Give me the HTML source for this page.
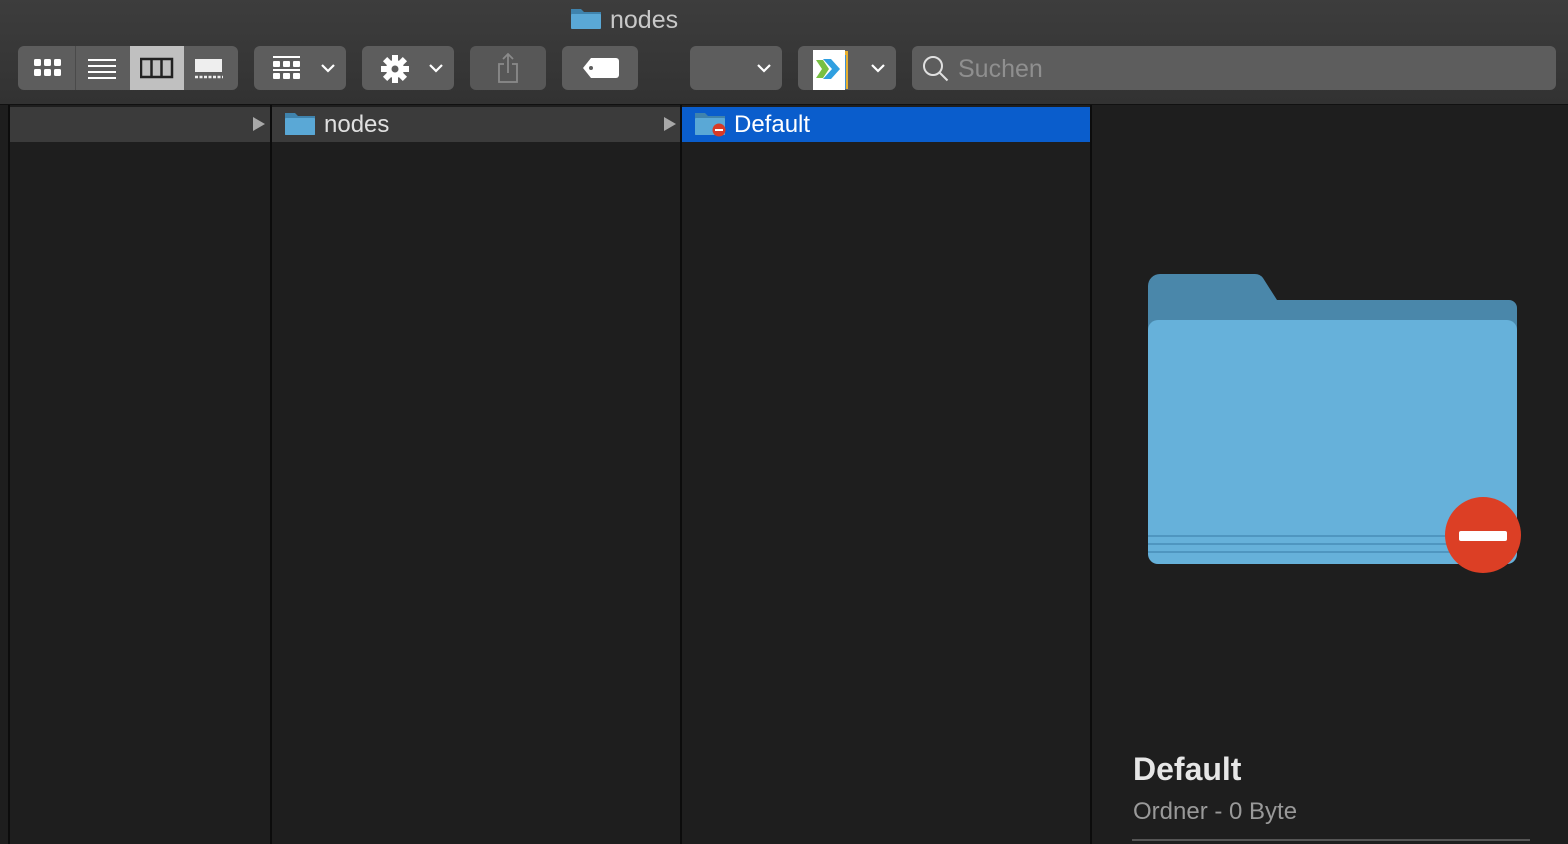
<!DOCTYPE html>
<html><head><meta charset="utf-8"><style>
*{margin:0;padding:0;box-sizing:border-box}
body{width:1568px;height:844px;background:#1e1e1e;font-family:"Liberation Sans",sans-serif;position:relative;overflow:hidden}
.bar{position:absolute;left:0;top:0;width:1568px;height:105px;background:linear-gradient(#3d3d3d,#323232);border-bottom:1px solid #111}
.btn{position:absolute;top:46px;height:44px;background:#5d5d5d;border-radius:6px}
.a{position:absolute}
.sep{position:absolute;top:105px;width:2px;height:739px;background:#0c0c0c}
.row{position:absolute;top:107px;height:35px;background:#3b3b3b}
.txt{position:absolute;color:#e0e0e0;font-size:24px}
</style></head><body>
<div class="bar"></div>
<svg class="a" style="left:570px;top:6px" width="32" height="24"><path d="M1 3h10l3 3h17v16H1z" fill="#3f83ad"/><rect x="1" y="8" width="30" height="15" rx="1" fill="#5aa8d6"/></svg>
<div class="txt" style="left:610px;top:6px;color:#c8c8c8;font-size:25px">nodes</div>

<div class="btn" style="left:18px;width:220px;overflow:hidden">
 <div class="a" style="left:57px;top:0;width:1px;height:44px;background:#4a4a4a"></div>
 <div class="a" style="left:112px;top:0;width:54px;height:44px;background:#c0c0c0"></div>
 <svg class="a" style="left:15px;top:12px" width="30" height="20" fill="#fff"><rect x="1" y="1" width="7" height="7" rx="1.5"/><rect x="11" y="1" width="7" height="7" rx="1.5"/><rect x="21" y="1" width="7" height="7" rx="1.5"/><rect x="1" y="11" width="7" height="7" rx="1.5"/><rect x="11" y="11" width="7" height="7" rx="1.5"/><rect x="21" y="11" width="7" height="7" rx="1.5"/></svg>
 <svg class="a" style="left:70px;top:12px" width="30" height="22" stroke="#fff" stroke-width="2"><path d="M0 2h28M0 8h28M0 14h28M0 20h28"/></svg>
 <svg class="a" style="left:122px;top:11px" width="34" height="22"><rect x="1" y="2" width="31" height="18" fill="none" stroke="#222" stroke-width="2.5"/><path d="M11.5 2v18M21.5 2v18" stroke="#222" stroke-width="2.5"/></svg>
 <svg class="a" style="left:176px;top:12px" width="30" height="22"><rect x="1" y="1" width="27" height="13" fill="#eee"/><path d="M1 19h28" stroke="#eee" stroke-width="2.5" stroke-dasharray="3 1.5"/></svg>
</div>
<div class="btn" style="left:254px;width:92px">
 <svg class="a" style="left:18px;top:10px" width="30" height="26" fill="#fff"><rect x="1" y="0" width="27" height="2"/><rect x="1" y="5" width="7" height="6" rx="1"/><rect x="11" y="5" width="7" height="6" rx="1"/><rect x="21" y="5" width="7" height="6" rx="1"/><rect x="1" y="13" width="27" height="2"/><rect x="1" y="17" width="7" height="6" rx="1"/><rect x="11" y="17" width="7" height="6" rx="1"/><rect x="21" y="17" width="7" height="6" rx="1"/></svg>
 <svg class="a" style="left:66px;top:16px" width="16" height="12"><path d="M2 3l6 6 6-6" stroke="#fff" stroke-width="2.2" fill="none"/></svg>
</div>
<div class="btn" style="left:362px;width:92px">
 <svg class="a" style="left:18px;top:8px" width="30" height="30"><g transform="translate(15 15)" fill="#fff"><circle r="9"/><g><rect x="-3" y="-14" width="6" height="28"/><rect x="-3" y="-14" width="6" height="28" transform="rotate(45)"/><rect x="-3" y="-14" width="6" height="28" transform="rotate(90)"/><rect x="-3" y="-14" width="6" height="28" transform="rotate(135)"/></g><circle r="3.5" fill="#5d5d5d"/></g></svg>
 <svg class="a" style="left:66px;top:16px" width="16" height="12"><path d="M2 3l6 6 6-6" stroke="#fff" stroke-width="2.2" fill="none"/></svg>
</div>
<div class="btn" style="left:470px;width:76px;background:#575757">
 <svg class="a" style="left:26px;top:6px" width="24" height="32" stroke="#8a8a8a" stroke-width="1.8" fill="none"><path d="M12 2v19M7 7l5-5 5 5M8 12H3v18h18V12h-5"/></svg>
</div>
<div class="btn" style="left:562px;width:76px">
 <svg class="a" style="left:20px;top:11px" width="38" height="22"><path d="M9 1h25a3 3 0 0 1 3 3v14a3 3 0 0 1-3 3H9L1 11z" fill="#fff"/><circle cx="9" cy="11" r="2" fill="#5d5d5d"/></svg>
</div>
<div class="btn" style="left:690px;width:92px">
 <svg class="a" style="left:66px;top:16px" width="16" height="12"><path d="M2 3l6 6 6-6" stroke="#fff" stroke-width="2.2" fill="none"/></svg>
</div>
<div class="btn" style="left:798px;width:98px">
 <svg class="a" style="left:12px;top:1px" width="42" height="46"><rect x="14" y="4" width="24" height="38" fill="#e8b030"/><rect x="30" y="8" width="6" height="34" fill="#3f8fd0"/><rect x="3" y="3" width="32" height="40" fill="#fff"/><path d="M13 12h8l9 10-9 10h-8l9-10z" fill="#2f9fe0"/><path d="M6 13h7l6 9-6 9H6l6-9z" fill="#78c043"/></svg>
 <svg class="a" style="left:72px;top:16px" width="16" height="12"><path d="M2 3l6 6 6-6" stroke="#fff" stroke-width="2.2" fill="none"/></svg>
</div>
<div class="btn" style="left:912px;width:644px">
 <svg class="a" style="left:10px;top:9px" width="28" height="28" stroke="#e0e0e0" stroke-width="2" fill="none"><circle cx="11" cy="11" r="9"/><path d="M17.5 17.5l8 8"/></svg>
 <div class="txt" style="left:46px;top:9px;color:#8f8f8f;font-size:25px">Suchen</div>
</div>

<div class="row" style="left:9px;width:262px"></div>
<svg class="a" style="left:252px;top:116px" width="14" height="16"><path d="M1 1l12 7-12 7z" fill="#a8a8a8"/></svg>
<div class="row" style="left:271px;width:410px"></div>
<svg class="a" style="left:284px;top:112px" width="32" height="24"><path d="M1 1h10l3 3h17v19H1z" fill="#3f83ad"/><rect x="1" y="6" width="30" height="17" rx="1" fill="#5aa8d6"/></svg>
<div class="txt" style="left:324px;top:111px">nodes</div>
<svg class="a" style="left:663px;top:116px" width="14" height="16"><path d="M1 1l12 7-12 7z" fill="#a8a8a8"/></svg>
<div class="row" style="left:681px;width:410px;background:#0a5dcc"></div>
<svg class="a" style="left:694px;top:110px" width="34" height="28"><path d="M1 3h10l3 3h17v19H1z" fill="#3f83ad"/><rect x="1" y="8" width="30" height="17" rx="1" fill="#5aa8d6"/><circle cx="25" cy="20" r="6.5" fill="#d83a26"/><rect x="21" y="19" width="8" height="2" fill="#fff"/></svg>
<div class="txt" style="left:734px;top:111px;color:#fff">Default</div>

<div class="sep" style="left:8px"></div>
<div class="sep" style="left:270px"></div>
<div class="sep" style="left:680px"></div>
<div class="sep" style="left:1090px"></div>

<svg class="a" style="left:1140px;top:266px" width="390" height="316">
 <path d="M20 8h95a10 10 0 0 1 8 4l14 22h232a8 8 0 0 1 8 8v240H8V20a12 12 0 0 1 12-12z" fill="#4a87aa"/>
 <rect x="8" y="54" width="369" height="244" rx="10" fill="#66b1da"/>
 <path d="M8 270h369M8 278h369M8 286h369" stroke="#4f96c0" stroke-width="2"/>
 <circle cx="343" cy="269" r="38" fill="#dc3f25"/>
 <rect x="319" y="265" width="48" height="10" rx="2" fill="#fff"/>
</svg>

<div class="txt" style="left:1133px;top:751px;font-size:32px;font-weight:bold;color:#e6e6e6">Default</div>
<div class="txt" style="left:1133px;top:798px;font-size:24px;color:#999">Ordner - 0 Byte</div>
<div class="a" style="left:1132px;top:839px;width:398px;height:2px;background:#555"></div>
</body></html>
